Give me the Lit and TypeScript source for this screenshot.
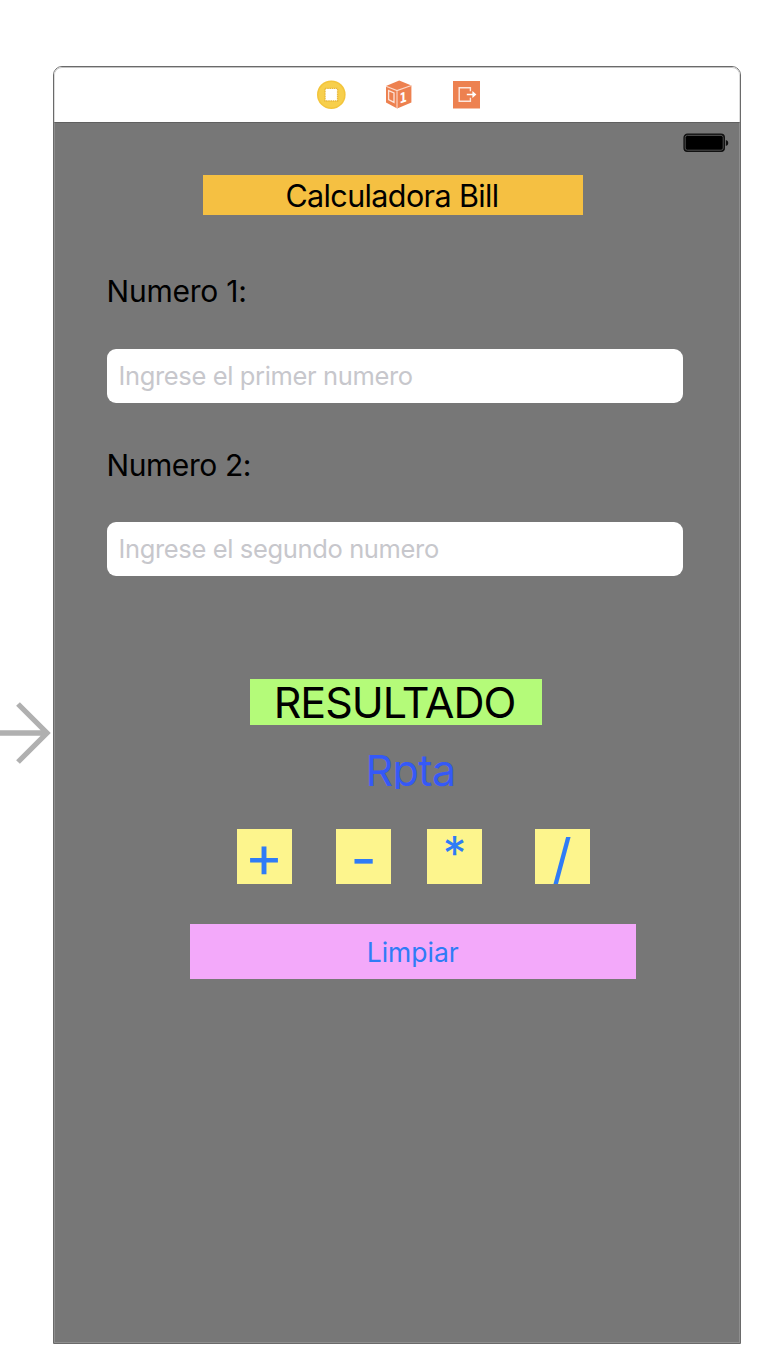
import { LitElement, html, css } from "lit";
import { customElement } from "lit/decorators.js";

@customElement("scene-dock")
class SceneDock extends LitElement {
  static styles = css`
    :host {
      display: flex;
      justify-content: center;
      align-items: flex-start;
      box-sizing: border-box;
      height: 55px;
      padding: 11px 0 0 1px;
      background: #fff;
      border-radius: 8px 8px 0 0;
      box-shadow: inset 0 1px 0 #c4c4c4, inset 1px 0 0 #dcdcdc, inset -1px 0 0 #dcdcdc;
    }
    svg {
      display: block;
    }
    .digit {
      font: 700 14px "DejaVu Sans", sans-serif;
      fill: #fff;
    }
  `;
  render() {
    return html`
      <svg width="168" height="32" viewBox="314 78 168 32">
        <circle cx="331.3" cy="94.7" r="14.3" fill="#f3c53c" />
        <circle cx="331.3" cy="94.7" r="12.8" fill="#f7cf4c" />
        <rect x="325" y="88.4" width="12.6" height="12.6" fill="#fff" stroke="#e9b93a" stroke-width="1.4" stroke-dasharray="1.6 .6" />
        <path d="M399.2 80.6 411.4 85.4V102.4L397.2 108.6 386 102.4V86Z" fill="#ed8150" />
        <path d="M386 86.2 397 90.6 411.4 85.6M397 90.6V108" fill="none" stroke="#fbd9ca" stroke-width="1.1" />
        <path d="M388.6 90.6 394 93V102.4L388.6 99.6Z" fill="none" stroke="#fce3d8" stroke-width="1.3" />
        <text class="digit" transform="translate(399.6 103.8) skewY(-18) scale(.76 1)">1</text>
        <rect x="453" y="81" width="27" height="27.5" fill="#ed8150" />
        <path d="M470.4 91.2V87.7H459.2V101.3H470.4V97.8" fill="none" stroke="#fde6dc" stroke-width="1.4" />
        <path d="M466.8 94.5H474" fill="none" stroke="#fff" stroke-width="1.6" />
        <path d="M472.4 91 476.4 94.5 472.4 98Z" fill="#fff" />
      </svg>
    `;
  }
}

@customElement("app-root")
class AppRoot extends LitElement {
  static styles = css`
    :host {
      display: flex;
      align-items: flex-start;
      box-sizing: border-box;
      width: 762px;
      height: 1370px;
      padding-top: 66px;
      background: #fff;
      overflow: hidden;
      font-family: Inter, "Liberation Sans", sans-serif;
      color: #000;
    }
    .entry {
      display: block;
      flex: none;
      width: 53px;
      height: 66px;
      margin-top: 634px;
    }
    .scene {
      box-sizing: border-box;
      flex: none;
      width: 688px;
      height: 1278px;
      border: 1px solid #6a6a6a;
      border-radius: 9px 9px 0 0;
      overflow: hidden;
    }
    .screen {
      box-sizing: border-box;
      height: 1221px;
      border: 1px solid #8e8e8e;
      border-top-color: #606060;
      background: #777;
      display: flex;
      flex-direction: column;
      align-items: flex-start;
    }
    .status {
      align-self: flex-end;
      margin: 10px 10px 0 0;
      height: 20px;
    }
    .status svg {
      display: block;
    }
    .line {
      white-space: nowrap;
      text-align: center;
      box-sizing: border-box;
    }
    .title {
      width: 380px;
      height: 40px;
      margin: 22px 0 0 148px;
      padding-right: 2px;
      background: #f5c042;
      font-size: 30.5px;
      line-height: 41px;
      letter-spacing: -0.62px;
    }
    .label {
      margin-left: 51.5px;
      height: 40px;
      font-size: 30px;
      line-height: 40px;
      letter-spacing: -0.22px;
    }
    .first {
      margin-top: 56px;
    }
    .second {
      margin-top: 42px;
      letter-spacing: -0.42px;
    }
    .field {
      box-sizing: border-box;
      width: 576px;
      height: 54px;
      margin: 38px 0 0 51.5px;
      padding: 0 12px;
      border: 0;
      border-radius: 9px;
      background: #fff;
      font: 25.5px/54px Inter, "Liberation Sans", sans-serif;
      letter-spacing: -0.36px;
      outline: none;
    }
    .field.lower {
      margin-top: 37.4px;
      padding-bottom: 1px;
      line-height: 53px;
    }
    .field::placeholder {
      color: #c7c7cc;
      opacity: 1;
    }
    .result {
      width: 292px;
      height: 46px;
      margin: 102.6px 0 0 195px;
      padding-right: 3px;
      background: #b4fb79;
      font-size: 43px;
      line-height: 46px;
      letter-spacing: -1.05px;
    }
    .answer {
      width: 96px;
      height: 37px;
      margin: 27px 0 0 307.5px;
      font-size: 43px;
      line-height: 36px;
      letter-spacing: -0.6px;
      color: #3559f7;
      overflow: hidden;
    }
    .keys {
      display: flex;
      margin: 40px 0 0 182px;
    }
    .key {
      width: 55px;
      height: 55px;
      background: #fdf58d;
      color: #2f7cf6;
      overflow: hidden;
    }
    .plus {
      font-size: 59px;
      line-height: 54px;
      text-indent: -1px;
    }
    .minus {
      margin-left: 44px;
      font-size: 57px;
      line-height: 60px;
    }
    .times {
      margin-left: 36px;
      font-size: 47px;
      line-height: 47px;
    }
    .divide {
      margin-left: 53px;
      font-size: 55px;
      line-height: 61px;
      text-indent: -1px;
    }
    .clear {
      width: 445.5px;
      height: 55px;
      margin: 40px 0 0 135px;
      background: #f3a9fa;
      color: #2f7cf6;
      font-size: 26.5px;
      line-height: 56px;
    }
  `;

  render() {
    return html`
      <svg class="entry" viewBox="0 0 53 66">
        <path d="M0 33H46M18 4 47 33 18 62" fill="none" stroke="#b0b0b0" stroke-width="5.3" />
      </svg>
      <div class="scene">
        <scene-dock></scene-dock>
        <div class="screen">
          <div class="status">
            <svg width="46" height="20" viewBox="0 0 46 20">
              <rect x="1" y="1.2" width="40.4" height="17.2" rx="3.5" fill="#000" stroke="#111" stroke-width="1.2" />
              <rect x="2.2" y="2.4" width="38" height="14.8" rx="2.2" fill="#000" stroke="#666" stroke-width=".8" />
              <path d="M42.8 7Q45.3 7.6 45.3 10T42.8 13Z" fill="#111" />
            </svg>
          </div>
          <div class="line title">Calculadora Bill</div>
          <div class="line label first">Numero 1:</div>
          <input class="field" placeholder="Ingrese el primer numero" />
          <div class="line label second">Numero 2:</div>
          <input class="field lower" placeholder="Ingrese el segundo numero" />
          <div class="line result">RESULTADO</div>
          <div class="line answer">Rpta</div>
          <div class="keys">
            <div class="line key plus">+</div>
            <div class="line key minus">-</div>
            <div class="line key times">*</div>
            <div class="line key divide">/</div>
          </div>
          <div class="line clear">Limpiar</div>
        </div>
      </div>
    `;
  }
}
